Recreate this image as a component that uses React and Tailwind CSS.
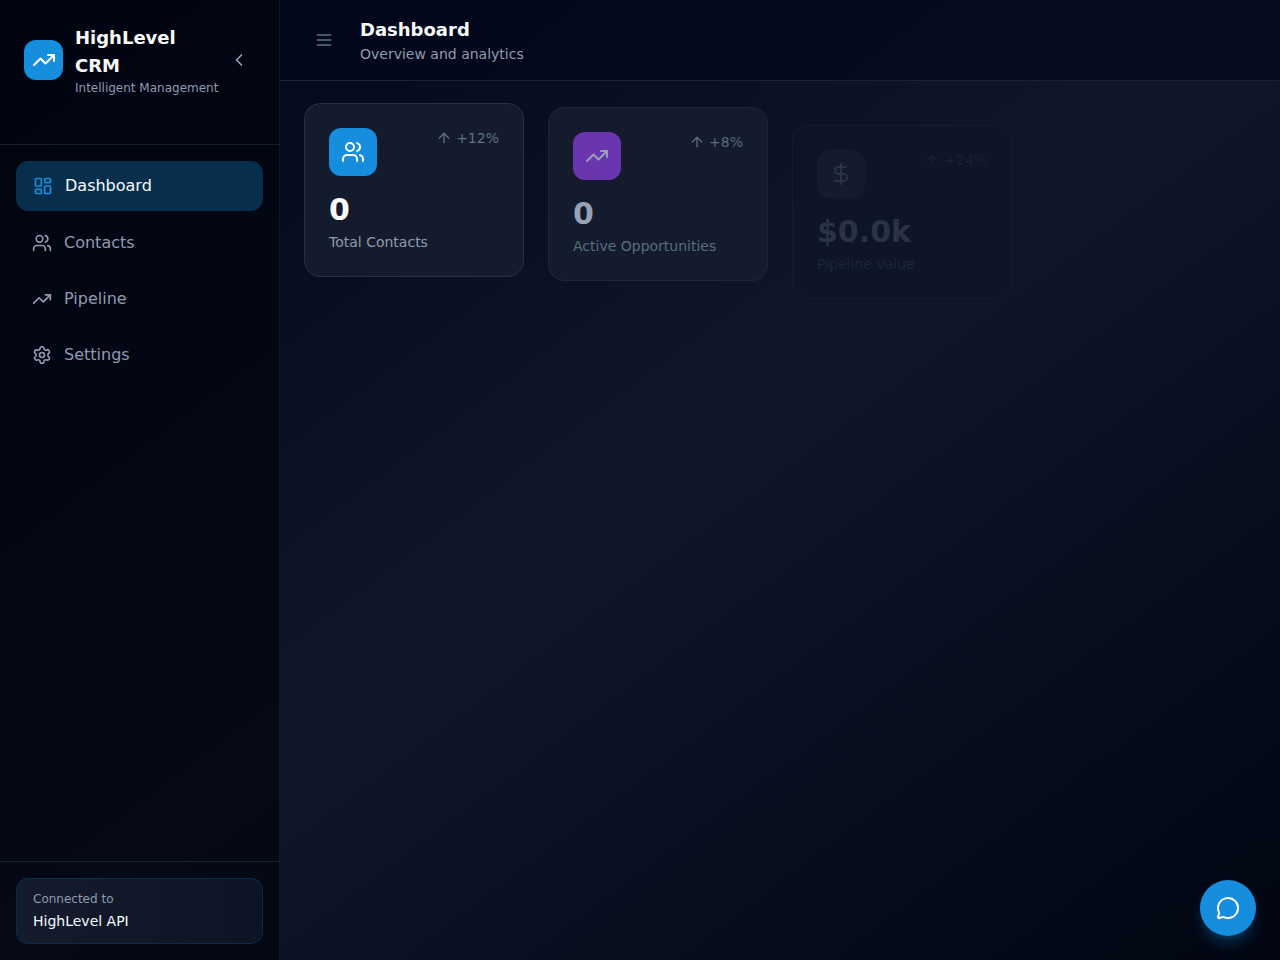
import React from 'react';
import { ArrowUp, ChevronLeft, DollarSign, LayoutDashboard, MessageCircle, Settings, TrendingUp, Users } from 'lucide-react';

const navItems = [
    { label: 'Dashboard', icon: LayoutDashboard, active: true },
    { label: 'Contacts', icon: Users },
    { label: 'Pipeline', icon: TrendingUp },
    { label: 'Settings', icon: Settings },
];

const stats = [
    {
        label: 'Total Contacts',
        value: '0',
        change: '+12%',
        icon: Users,
        card: 'bg-[#141b2c] border-[#27303f]',
        tile: 'bg-[#178ddd] text-white',
        changeColor: 'text-[#5a7386]',
        valueColor: 'text-slate-50',
        labelColor: 'text-[#8f9caf]',
    },
    {
        label: 'Active Opportunities',
        value: '0',
        change: '+8%',
        icon: TrendingUp,
        card: 'mt-1 bg-[#141b2c] border-[#1d2737]',
        tile: 'bg-[#6a36b0] text-[#97a2b4]',
        changeColor: 'text-[#546d7f]',
        valueColor: 'text-[#97a2b4]',
        labelColor: 'text-[#566f80]',
    },
    {
        label: 'Pipeline Value',
        value: '$0.0k',
        change: '+24%',
        icon: DollarSign,
        card: 'mt-[22px] bg-[#0e1526]/60 border-[#141b2c]',
        tile: 'bg-[#141b2c] text-[#2a3343]',
        changeColor: 'text-[#182232]',
        valueColor: 'text-[#2a3343]',
        labelColor: 'text-[#1b2636]',
    },
];

function MenuIcon() {
    return (
        <svg className="h-5 w-5" fill="none" viewBox="0 0 24 24" stroke="currentColor" strokeWidth={2} strokeLinecap="round">
            <path d="M4 6h16M4 12h16M4 18h16" />
        </svg>
    );
}

function StatCard({ stat }) {
    const Icon = stat.icon;

    return (
        <div className={`rounded-2xl border p-6 ${stat.card}`}>
            <div className="mb-4 flex items-start justify-between">
                <div className={`flex h-12 w-12 items-center justify-center rounded-xl ${stat.tile}`}>
                    <Icon className="h-6 w-6" />
                </div>
                <div className={`flex items-center gap-1 text-sm ${stat.changeColor}`}>
                    <ArrowUp className="h-4 w-4" />
                    <span>{stat.change}</span>
                </div>
            </div>
            <p className={`mb-1 text-3xl font-bold ${stat.valueColor}`}>{stat.value}</p>
            <p className={`text-sm ${stat.labelColor}`}>{stat.label}</p>
        </div>
    );
}

function Sidebar() {
    return (
        <aside className="flex w-[280px] shrink-0 flex-col border-r border-[#111a2b] bg-[#02040e]/70">
            <div className="border-b border-[#141c2d] px-6 pt-6 pb-12">
                <div className="flex items-center justify-between">
                    <div className="flex items-center gap-3">
                        <div className="flex h-10 w-[39px] shrink-0 items-center justify-center rounded-xl bg-[#178ddd] text-white">
                            <TrendingUp className="h-6 w-6" />
                        </div>
                        <div>
                            <h1 className="w-28 text-lg font-bold text-slate-50">HighLevel CRM</h1>
                            <p className="text-xs whitespace-nowrap text-[#8f9caf]">Intelligent Management</p>
                        </div>
                    </div>
                    <button type="button" aria-label="Collapse sidebar" className="rounded-lg p-1.5 text-[#94a3b8]">
                        <ChevronLeft className="h-5 w-5" />
                    </button>
                </div>
            </div>

            <nav className="flex-1 space-y-2 p-4">
                {navItems.map(({ label, icon: Icon, active }) => (
                    <a
                        key={label}
                        href="#"
                        className={`flex items-center gap-3 rounded-xl px-4 py-3 ${active ? 'border border-[#082f4c] bg-[#072f4c] text-slate-50' : 'text-[#8f9caf]'}`}
                    >
                        <Icon className={`h-5 w-5 ${active ? 'text-[#178ddd]' : ''}`} />
                        <span>{label}</span>
                    </a>
                ))}
            </nav>

            <div className="border-t border-[#1a2333] p-4">
                <div className="rounded-xl border border-[#072f4c] bg-linear-to-r from-[#141b2c] to-[#0d1425] px-4 py-3">
                    <p className="mb-1 text-xs text-[#8f9caf]">Connected to</p>
                    <p className="text-sm text-slate-50">HighLevel API</p>
                </div>
            </div>
        </aside>
    );
}

export default function App() {
    return (
        <div className="flex min-h-screen bg-linear-to-br from-[#020617] via-[#11162a] to-[#020612] font-['DejaVu_Sans',sans-serif]">
            <Sidebar />

            <div className="min-w-0 flex-1">
                <header className="flex items-center gap-4 border-b border-[#1a2333] bg-[#02061a]/60 px-6 py-4">
                    <button type="button" aria-label="Toggle menu" className="rounded-lg p-2.5 text-[#5a7386]">
                        <MenuIcon />
                    </button>
                    <div>
                        <h2 className="text-lg font-bold text-slate-50">Dashboard</h2>
                        <p className="text-sm text-[#8f9caf]">Overview and analytics</p>
                    </div>
                </header>

                <main className="grid grid-cols-4 items-start gap-6 px-6 pt-[22px] pb-6">
                    {stats.map((stat) => (
                        <StatCard key={stat.label} stat={stat} />
                    ))}
                </main>
            </div>

            {/* Chat launcher */}
            <button
                type="button"
                aria-label="Open chat"
                className="fixed right-6 bottom-6 flex h-14 w-14 items-center justify-center rounded-full bg-[#178ddd] text-white shadow-lg shadow-[#178ddd]/30"
            >
                <MessageCircle className="h-6 w-6" />
            </button>
        </div>
    );
}
